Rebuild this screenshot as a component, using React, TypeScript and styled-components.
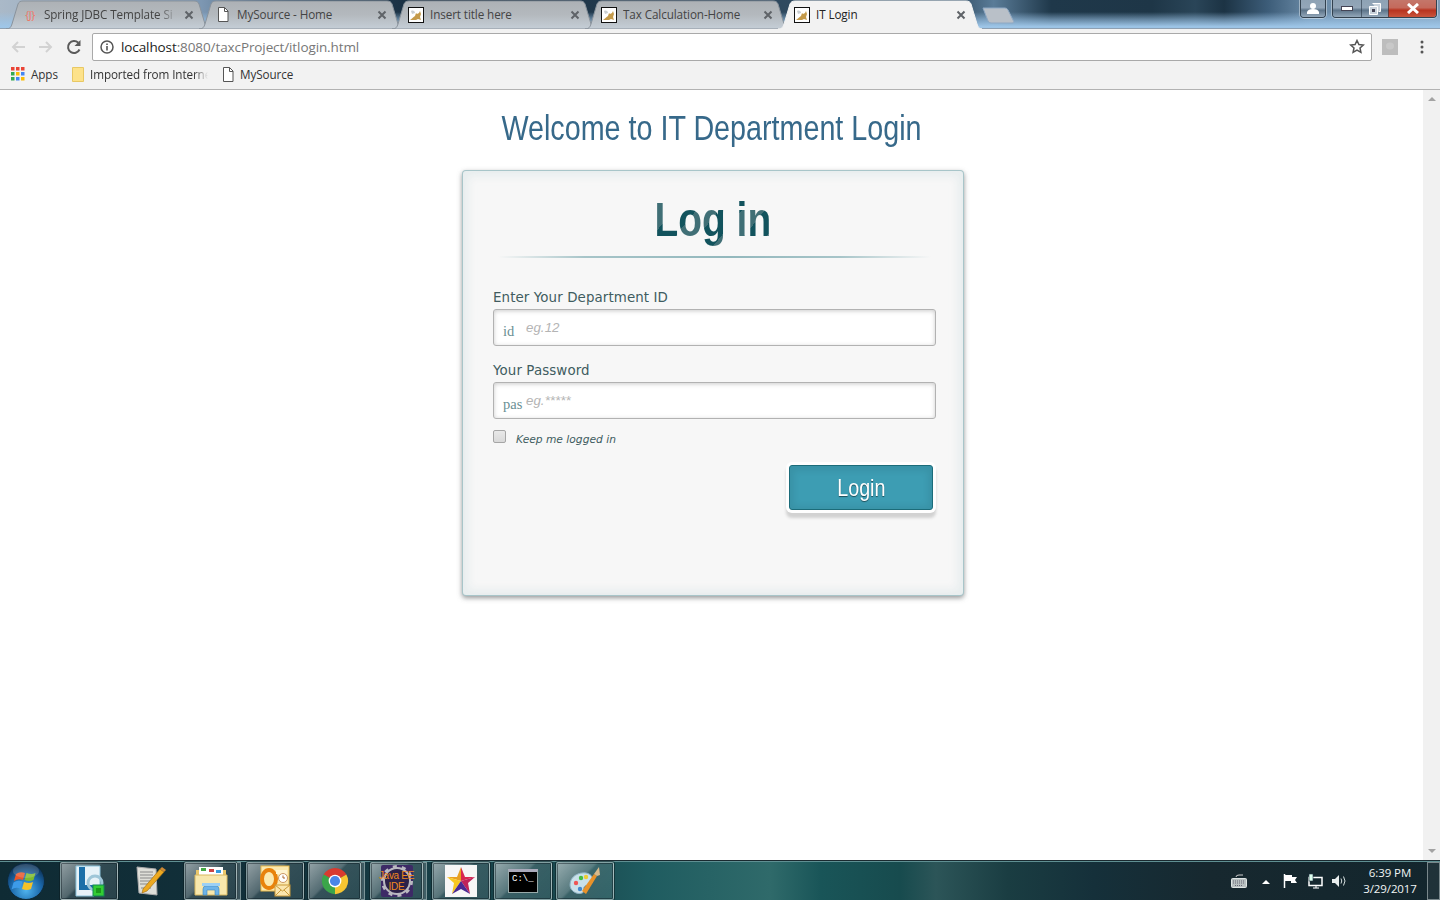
import React from "react";
import styled, { createGlobalStyle } from "styled-components";

const Global = createGlobalStyle`
  html, body { margin: 0; padding: 0; height: 100%; overflow: hidden; background: #fff; }
  #root { height: 900px; }
  * { box-sizing: border-box; }
`;
const UI = `"Open Sans", "Noto Sans", "Liberation Sans", sans-serif`;
const NARROW = `"Liberation Sans", sans-serif`;
const FORM = `"DejaVu Sans", "Noto Sans", sans-serif`;

const Screen = styled.div`
  width: 1440px; height: 900px; display: flex; flex-direction: column; overflow: hidden;
`;
const TitleBar = styled.div`
  position: relative; height: 29px; flex: none; display: flex; padding-left: 6px;
  border-bottom: 1px solid #8ea0b2;
  background:
    linear-gradient(90deg, #aab9c8 0%, #7d97b2 14%, #35536c 20%, #14293a 30%, #3d5a72 67%, #5a7c98 69%, #1f384a 73%, #1e3647 80%, #2a4558 83%, #1c3344 85%, #3c5c78 88%, #6c8ca8 91%, #7e9cb6 100%);
  &::after {
    content: ""; position: absolute; left: 0; right: 0; bottom: 0; height: 16px;
    background: linear-gradient(180deg, rgba(155,195,230,0) 0%, rgba(155,195,230,.55) 45%, rgba(158,198,232,.98) 90%);
    pointer-events: none;
  }
`;
const TabBox = styled.div<{ $active?: boolean }>`
  position: relative; z-index: ${(p) => (p.$active ? 3 : 2)}; flex: none; width: 204px; height: 28px;
  margin-right: -11px; padding: 0 16px; display: flex; align-items: center;
  font: 11.7px ${UI}; color: ${(p) => (p.$active ? "#222" : "#444")};
`;
const TabShape = styled.svg`
  position: absolute; left: 0; top: 0; width: 204px; height: 29px;
`;
const TabIcon = styled.span`
  position: relative; flex: none; width: 16px; height: 16px; margin: 1px 6px 0 0; display: flex; align-items: center; justify-content: center;
`;
const TabTitle = styled.span<{ $fade?: boolean }>`
  position: relative; flex: 1; min-width: 0; white-space: nowrap; overflow: hidden; letter-spacing: -.1px;
  ${(p) => p.$fade && `-webkit-mask-image: linear-gradient(90deg, #000 85%, transparent 100%); mask-image: linear-gradient(90deg, #000 85%, transparent 100%);`}
`;
const JMark = styled.span`
  font: 11px ${UI}; color: #ee7766; letter-spacing: -.5px; white-space: nowrap;
`;
const TabClose = styled.svg`
  position: relative; flex: none; width: 10px; height: 10px; margin: 1px 0 0 6px;
`;
const NewTab = styled.svg`
  position: relative; z-index: 2; flex: none; width: 34px; height: 17px; margin: 7px 0 0 11px;
`;
const WindowControls = styled.div`
  position: absolute; z-index: 4; top: 0; right: 3px; height: 19px; display: flex; gap: 6px;
`;
const CtlGroup = styled.div`
  display: flex; height: 18px; border: 1px solid #33424f; border-top: 0; border-radius: 0 0 4px 4px;
  box-shadow: 0 0 0 1px rgba(255,255,255,.4); overflow: hidden;
`;
const CtlBtn = styled.div<{ $w: number; $red?: boolean }>`
  width: ${(p) => p.$w}px; display: flex; align-items: center; justify-content: center;
  border-left: 1px solid rgba(40,55,70,.6);
  &:first-child { border-left: 0; }
  background: ${(p) => p.$red
    ? "linear-gradient(180deg,#c4766a 0%,#c46a5c 45%,#b8331f 60%,#c9543c 100%)"
    : "linear-gradient(180deg,#8ea2b4 0%,#93a6b8 45%,#5d7489 60%,#94a8ba 100%)"};
`;

const Toolbar = styled.div`
  height: 32px; flex: none; display: flex; align-items: center; background: #f2f2f2; padding: 3px 0 0 0;
`;
const NavBtn = styled.div<{ $w: number }>`
  flex: none; width: ${(p) => p.$w}px; display: flex; justify-content: center; align-items: center;
`;
const Omnibox = styled.div`
  flex: none; width: 1280px; height: 28px; background: #fff; border: 1px solid #a9a9a9; border-radius: 2px;
  display: flex; align-items: center; padding: 0 6px 0 7px;
`;
const Url = styled.div`
  flex: 1; margin-left: 7px; font: 13.5px ${UI}; color: #777; letter-spacing: -.1px; white-space: nowrap;
  b { font-weight: 400; color: #222; }
`;
const Bookmarks = styled.div`
  height: 29px; flex: none; display: flex; align-items: center; background: #f2f2f2; border-bottom: 1px solid #b2b2b2;
  padding: 0 0 2px 11px; font: 11.7px ${UI}; color: #333;
`;
const Bookmark = styled.div<{ $w: number }>`
  flex: none; width: ${(p) => p.$w}px; display: flex; align-items: center; gap: 6px; white-space: nowrap; overflow: hidden; letter-spacing: -.1px;
`;
const BookmarkFade = styled.span`
  width: 118px; overflow: hidden;
  -webkit-mask-image: linear-gradient(90deg, #000 88%, transparent 100%); mask-image: linear-gradient(90deg, #000 88%, transparent 100%);
`;

const Main = styled.div`
  flex: 1; min-height: 0; display: flex;
`;
const Page = styled.div`
  flex: 1; min-width: 0; background: #fff; display: flex; flex-direction: column;
`;
const Scrollbar = styled.div`
  flex: none; width: 17px; background: #f1f1f1; display: flex; flex-direction: column; justify-content: space-between; align-items: center; padding: 7px 0;
`;
const Arrow = styled.div<{ $down?: boolean }>`
  width: 0; height: 0; border-left: 4px solid transparent; border-right: 4px solid transparent;
  ${(p) => (p.$down ? "border-top: 4px solid #a3a3a3;" : "border-bottom: 4px solid #a3a3a3;")}
`;
const Heading = styled.h1`
  margin: 16px 0 0; text-align: center; height: 64px; font: 400 35px/44px ${NARROW}; color: #37698a; transform: scaleX(.82);
`;
const Card = styled.div`
  width: 502px; height: 426px; margin-left: 462px; background: #f7f7f7; border: 1px solid rgba(147,184,189,.8); border-radius: 4px;
  box-shadow: 0 2px 5px rgba(105,108,109,.7), inset 0 0 8px 5px rgba(208,223,226,.4);
  padding: 18px 27px 0 30px; display: flex; flex-direction: column;
`;
const CardTitle = styled.h2`
  margin: 0; padding: 1px 4px 0 0; height: 60px; text-align: center; font: 700 48px/60px ${NARROW}; color: #12535d; transform: scaleX(.81);
  background: repeating-linear-gradient(-45deg, #12535d, #12535d 20px, #406f76 20px, #406f76 40px);
  -webkit-background-clip: text; background-clip: text; -webkit-text-fill-color: transparent;
`;
const Divider = styled.div`
  height: 2px; margin: 7px 5px 0 5px; flex: none;
  background: linear-gradient(90deg, rgba(147,184,189,0) 0%, rgba(147,184,189,.8) 20%, #93b8bd 53%, rgba(147,184,189,.8) 79%, rgba(147,184,189,0) 100%);
`;
const Field = styled.div<{ $first?: boolean }>`
  margin-top: ${(p) => (p.$first ? 30 : 15)}px; display: flex; flex-direction: column;
`;
const Label = styled.label`
  font: 13.4px/20px ${FORM}; color: #405c60; height: 21px; letter-spacing: .1px;
`;
const InputWrap = styled.div`
  position: relative; height: 37px; display: flex;
`;
const InputGlyph = styled.span`
  position: absolute; left: 10px; top: 13px; font: 14.5px/18px "Liberation Serif", serif; color: #6b8f94;
`;
const Input = styled.input`
  flex: 1; min-width: 0; height: 37px; padding: 0 5px 0 32px; background: #fff; border: 1px solid #b2b2b2; border-radius: 3px;
  box-shadow: inset 0 1px 4px 0 rgba(168,168,168,.6); font: italic 13.3px "Liberation Sans", sans-serif; word-spacing: -3.5px; outline: none;
  &::placeholder { color: #b4b4b4; opacity: 1; }
`;
const KeepRow = styled.div`
  display: flex; align-items: center; margin-top: 12px; height: 16px;
`;
const Check = styled.span`
  flex: none; width: 13px; height: 13px; border: 1px solid #a6a6a6; border-radius: 2px; background: linear-gradient(180deg,#e9e9e9,#d9d9d9); margin-top: -5px;
`;
const KeepLabel = styled.span`
  margin-left: 10px; font: italic 10.7px/16px ${FORM}; color: #405c60; margin-top: 2px;
`;
const BtnRow = styled.div`
  display: flex; justify-content: flex-end; margin-top: 18px; padding-right: 3px;
`;
const LoginBtn = styled.button`
  width: 144px; height: 45px; padding: 0; background: #3d9db3; border: 1px solid #1c6c7a; border-radius: 3px; color: #fff;
  font: 400 24px ${NARROW}; text-shadow: 0 1px 1px rgba(0,0,0,.5);
  box-shadow: inset 0 1px 6px 4px rgba(0,0,0,.07), 0 0 0 3px #fefefe, 0 5px 3px 3px #d2d2d2;
`;
const LoginText = styled.span`
  display: inline-block; transform: scaleX(.82);
`;

const Taskbar = styled.div`
  position: relative; height: 40px; flex: none; display: flex; align-items: center; padding: 1px 0 1px 60px;
  border-top: 1px solid #1a2a30; box-shadow: inset 0 1px 0 #5f8f92;
  background:
    linear-gradient(90deg, #0f2b34 0%, #12303a 18%, #1a4a50 40%, #1f5c60 45%, #2f6a6a 53.5%, #195558 57%, #174b4e 62.500%, #2c5558 65%, #1a3d42 70%, #15303a 76%, #17282f 84%, #13262d 100%);
`;
const Orb = styled.svg`
  position: absolute; left: 6px; top: 1px; width: 40px; height: 38px;
`;
const TaskItems = styled.div`
  display: flex; gap: 4px; height: 38px;
`;
const TaskBtn = styled.div<{ $plain?: boolean; $stack?: boolean }>`
  position: relative; width: ${(p) => (p.$stack ? 53 : 58)}px; margin-right: ${(p) => (p.$stack ? 5 : 0)}px;
  height: 38px; display: flex; align-items: center; justify-content: center; border-radius: 2px;
  ${(p) => !p.$plain && `
    border: 1px solid rgba(185,205,205,.6);
    box-shadow: inset 0 0 0 1px rgba(10,25,30,.45), 0 0 0 1px rgba(10,25,30,.5);
    background: linear-gradient(135deg, rgba(255,255,255,.55) 0%, rgba(255,255,255,.28) 42%, rgba(255,255,255,.14) 46%, rgba(255,255,255,.1) 100%);
  `}
  ${(p) => p.$stack && `
    &::after { content: ""; position: absolute; top: -1px; bottom: -1px; right: -5px; width: 3px;
      border: 1px solid rgba(185,205,205,.5); border-left: 0; background: rgba(255,255,255,.18); }
  `}
`;
const Tray = styled.div`
  margin-left: auto; display: flex; align-items: center; height: 38px; color: #fff;
`;
const TrayIcon = styled.svg<{ $w: number; $ml: number }>`
  flex: none; width: ${(p) => p.$w}px; height: 16px; margin-left: ${(p) => p.$ml}px;
`;
const Clock = styled.div`
  flex: none; width: 72px; margin-left: 8px; text-align: center; font: 11.5px/16px ${UI}; color: #f0f5f5; letter-spacing: -.1px;
`;
const ShowDesktop = styled.div`
  flex: none; width: 13px; height: 38px; margin-left: 1px; border: 1px solid rgba(230,240,240,.45); background: rgba(255,255,255,.06);
`;

const Tomcat = () => (
  <svg width="16" height="16" viewBox="0 0 16 16">
    <rect x=".5" y=".5" width="15" height="15" fill="#fff" stroke="#111" />
    <path d="M2 13c2-1 3-3 5-4l1-3 1 1 2-1 1-2 1 3-1 3 1 3-3-1-2 1H2z" fill="#c49a4a" />
    <path d="M3 4c2-1 4 0 4 2L4 7z" fill="#c9ced1" />
  </svg>
);
const Page16 = () => (
  <svg width="12" height="15" viewBox="0 0 12 15" fill="#fff" stroke="#555">
    <path d="M1.500.5h6l3.500 3.500v10.500h-9.500z" /><path d="M7.500.5v4h3.500" fill="none" />
  </svg>
);
const Close = () => (
  <TabClose viewBox="0 0 10 10"><path d="M1.500 1.500l7 7M8.500 1.500l-7 7" stroke="#5f6368" strokeWidth="2" /></TabClose>
);
const Tab = ({ title, active, fade, icon }: { title: string; active?: boolean; fade?: boolean; icon: React.ReactNode }) => (
  <TabBox $active={active}>
    <TabShape viewBox="0 0 204 29">
      <defs>
        <linearGradient id="tabg" x1="0" y1="0" x2="0" y2="1">
          <stop offset="0" stopColor="#adb1b5" /><stop offset=".5" stopColor="#b4b9be" /><stop offset="1" stopColor="#c5ced7" />
        </linearGradient>
      </defs>
      <path d="M0 29 C4 29 5 27 6 24 L12 4 C13 2 14 1 17 1 H188 C191 1 192 2 193 4 L199 24 C200 27 201 29 204 29 Z"
        fill={active ? "#f2f2f2" : "url(#tabg)"} stroke={active ? "#f2f2f2" : "#8a939c"} strokeWidth="1" />
    </TabShape>
    <TabIcon>{icon}</TabIcon>
    <TabTitle $fade={fade}>{title}</TabTitle>
    <Close />
  </TabBox>
);

const Lync = () => (
  <svg width="36" height="34" viewBox="0 0 36 34">
    <path d="M5 2h24v22l-6 8H5z" fill="#e7f2f8" stroke="#8cc4dc" />
    <path d="M8 3h6v18h10v5H8z" fill="#1c6fa8" />
    <circle cx="24" cy="19" r="7" fill="none" stroke="#9fc6d8" strokeWidth="3" />
    <rect x="22" y="21" width="11" height="11" fill="#3c3" stroke="#185" />
    <rect x="25" y="24" width="5" height="5" fill="#1a9a1a" />
  </svg>
);
const Notepad = () => (
  <svg width="34" height="34" viewBox="0 0 34 34">
    <path d="M3 3l19 2 1 26-18-2z" fill="#deded8" stroke="#aaa" />
    <path d="M6 8h13M6 11h13M6 14h13M6 17h11M6 20h8M7 24h10" stroke="#888" strokeWidth="1" />
    <path d="M9 25L26 5l4 3-17 19-5 2z" fill="#eda920" stroke="#9a6a10" strokeWidth=".6" />
    <path d="M26 5l2-2 4 3-2 2z" fill="#c83" />
  </svg>
);
const Folder = () => (
  <svg width="34" height="32" viewBox="0 0 34 32">
    <path d="M2 5h30v24H2z" fill="#e9c66a" />
    <rect x="5" y="2" width="24" height="8" fill="#fff" />
    <rect x="7" y="3" width="5" height="3" fill="#4a4" /><rect x="15" y="4" width="5" height="3" fill="#c44" /><rect x="22" y="5" width="5" height="3" fill="#39d" />
    <path d="M1 10h32v20H1z" fill="#f7e7ac" stroke="#d9b860" />
    <path d="M9 30v-6q0-3 3-3h10q3 0 3 3v6h-4v-5h-8v5z" fill="#6db4e8" stroke="#3a86c0" strokeWidth=".6" />
    <rect x="8" y="18" width="18" height="3" fill="#9bd0f4" />
  </svg>
);
const Outlook = () => (
  <svg width="34" height="34" viewBox="0 0 34 34">
    <rect x="3" y="2" width="28" height="25" fill="#fbe9b0" stroke="#e9b94a" />
    <ellipse cx="11" cy="15" rx="7" ry="9" fill="none" stroke="#e8820c" strokeWidth="4" />
    <path d="M18 6h11v4H18z" fill="#fff4d0" />
    <circle cx="25" cy="14" r="4.500" fill="#fff" stroke="#c96" />
    <path d="M25 11.500V14h2" stroke="#a63" fill="none" />
    <rect x="17" y="21" width="15" height="11" fill="#fbe6ae" stroke="#c99a3a" />
    <path d="M17 21l7.500 6 7.500-6M17 32l6-6M32 32l-6-6" fill="none" stroke="#c99a3a" />
  </svg>
);
const Chrome = () => (
  <svg width="30" height="30" viewBox="0 0 32 32">
    <path d="M16 16L3.880 9A14 14 0 0 1 28.120 9z" fill="#d93a2f" />
    <path d="M16 16L28.120 9A14 14 0 0 1 16 30z" fill="#f6c531" />
    <path d="M16 16L16 30A14 14 0 0 1 3.880 9z" fill="#3ba54a" />
    <circle cx="16" cy="16" r="6.800" fill="#fff" />
    <circle cx="16" cy="16" r="5.400" fill="#4a86e8" />
  </svg>
);
const EEIcon = styled.div`
  position: relative; width: 32px; height: 32px; background: #3d2a66; border-radius: 2px; display: flex; align-items: center; justify-content: center;
`;
const EEText = styled.span`
  position: relative; text-align: center; font: 400 10px/11px "Liberation Sans", sans-serif; color: #f08a1d; white-space: nowrap; letter-spacing: -.3px;
`;
const EEGear = styled.svg`
  position: absolute; left: 0; top: 0;
`;
const JavaEE = () => (
  <EEIcon>
    <EEGear width="32" height="32" viewBox="0 0 32 32">
      <circle cx="16" cy="16" r="13" fill="#2c2148" stroke="#b9b9c0" strokeWidth="2" />
      <circle cx="16" cy="16" r="14.500" fill="none" stroke="#b9b9c0" strokeWidth="3" strokeDasharray="4 5.100" />
    </EEGear>
    <EEText>Java EE<br />IDE</EEText>
  </EEIcon>
);
const Star = () => (
  <svg width="32" height="32" viewBox="0 0 32 32">
    <rect width="32" height="32" fill="#f6f6f6" />
    <path d="M16 2v14L2 12l10 0z" fill="#e8a020" />
    <path d="M16 2l4 10h10l-14 4z" fill="#d8274f" />
    <path d="M2 12l14 4-9 13 2-11z" fill="#f8c820" />
    <path d="M30 12l-14 4 9 13-2-11z" fill="#c0245a" />
    <path d="M16 16L7 29l9-5 9 5z" fill="#4b2a92" />
  </svg>
);
const CmdBox = styled.div`
  width: 30px; height: 24px; background: #000; border: 1px solid #9aa; border-top: 3px solid #aab;
  color: #fff; font: 9px/14px "Liberation Mono", monospace; padding-left: 3px; overflow: hidden; white-space: pre;
`;
const Palette = () => (
  <svg width="34" height="32" viewBox="0 0 34 32">
    <path d="M2 20C2 11 11 7 18 8c6 1 8 6 6 10-2 3-6 1-8 4-1 3 1 5-2 6-5 2-12-2-12-8z" fill="#c9e0ea" stroke="#8fb3c4" />
    <circle cx="8" cy="18" r="2.200" fill="#e55" /><circle cx="13" cy="13" r="2.200" fill="#4b4" />
    <circle cx="18" cy="12" r="2.200" fill="#ec3" /><circle cx="12" cy="24" r="2.200" fill="#48c" />
    <path d="M14 26L26 9l3 2-11 18z" fill="#e8922a" />
    <path d="M26 9l5-7 1 8-3 1z" fill="#d9b98a" />
  </svg>
);

export default function App() {
  return (
    <Screen>
      <Global />
      <TitleBar>
        <Tab title="Spring JDBC Template Si" fade icon={<JMark>{"{J}"}</JMark>} />
        <Tab title="MySource - Home" icon={<Page16 />} />
        <Tab title="Insert title here" icon={<Tomcat />} />
        <Tab title="Tax Calculation-Home" icon={<Tomcat />} />
        <Tab title="IT Login" active icon={<Tomcat />} />
        <NewTab viewBox="0 0 34 17">
          <path d="M1 1h22q2 0 3 2l6 12q0 1-2 1H9q-2 0-3-2z" fill="#b9c0c8" stroke="#8fa9c4" />
        </NewTab>
        <WindowControls>
          <CtlGroup>
            <CtlBtn $w={24}>
              <svg width="12" height="11" viewBox="0 0 12 11"><circle cx="6" cy="3" r="3" fill="#fff" /><path d="M0 11V9q1-3 6-3t6 3v2z" fill="#fff" /></svg>
            </CtlBtn>
          </CtlGroup>
          <CtlGroup>
            <CtlBtn $w={28}><svg width="12" height="5" viewBox="0 0 12 5"><rect x=".5" y=".5" width="11" height="4" fill="#fff" stroke="#445" /></svg></CtlBtn>
            <CtlBtn $w={27}><svg width="12" height="12" viewBox="0 0 12 12"><path d="M3.500.5h8v8h-2M.5 3.500h8v8h-8z" fill="#c9d3dc" stroke="#fff" /><rect x="3" y="6" width="3" height="3" fill="#445" /></svg></CtlBtn>
            <CtlBtn $w={48} $red><svg width="14" height="11" viewBox="0 0 14 11"><path d="M2 1l10 9M12 1L2 10" stroke="#fff" strokeWidth="3" /></svg></CtlBtn>
          </CtlGroup>
        </WindowControls>
      </TitleBar>
      <Toolbar>
        <NavBtn $w={35}><svg width="16" height="14" viewBox="0 0 16 14"><path d="M15 7H3M8 2L3 7l5 5" fill="none" stroke="#d2d2d2" strokeWidth="2" /></svg></NavBtn>
        <NavBtn $w={21}><svg width="16" height="14" viewBox="0 0 16 14"><path d="M1 7h12M8 2l5 5-5 5" fill="none" stroke="#d2d2d2" strokeWidth="2" /></svg></NavBtn>
        <NavBtn $w={36}><svg width="16" height="16" viewBox="0 0 16 16"><path d="M13.500 10.500A6 6 0 1 1 12.300 3.800" fill="none" stroke="#5a5a5a" strokeWidth="2" /><path d="M14.500 1v6h-6z" fill="#5a5a5a" /></svg></NavBtn>
        <Omnibox>
          <svg width="14" height="14" viewBox="0 0 14 14"><circle cx="7" cy="7" r="6" fill="none" stroke="#555" strokeWidth="1.500" /><path d="M7 6v4.500M7 3.500v1.500" stroke="#555" strokeWidth="1.600" /></svg>
          <Url><b>localhost</b>:8080/taxcProject/itlogin.html</Url>
          <svg width="16" height="15" viewBox="0 0 16 15"><path d="M8 1.500l1.900 4 4.400.5-3.300 3 .9 4.300L8 11.200l-3.900 2.100.9-4.300-3.300-3 4.400-.5z" fill="none" stroke="#555" strokeWidth="1.500" /></svg>
        </Omnibox>
        <NavBtn $w={36}><svg width="16" height="16" viewBox="0 0 16 16"><rect width="16" height="16" fill="#bdbdbd" /><ellipse cx="8" cy="7" rx="4" ry="3.500" fill="#c8c8c8" /></svg></NavBtn>
        <NavBtn $w={28}><svg width="4" height="14" viewBox="0 0 4 14"><circle cx="2" cy="2" r="1.500" fill="#555" /><circle cx="2" cy="7" r="1.500" fill="#555" /><circle cx="2" cy="12" r="1.500" fill="#555" /></svg></NavBtn>
      </Toolbar>
      <Bookmarks>
        <Bookmark $w={61}>
          <svg width="14" height="14" viewBox="0 0 14 14">
            {[0, 5, 10].map((y, r) => [0, 5, 10].map((x, c) => (
              <rect key={`${x}${y}`} x={x} y={y} width="3.500" height="3.500"
                fill={[["#ea4335", "#ea4335", "#ea4335"], ["#34a853", "#fbbc05", "#4285f4"], ["#34a853", "#4285f4", "#fbbc05"]][r][c]} />
            )))}
          </svg>
          Apps
        </Bookmark>
        <Bookmark $w={150}>
          <svg width="12" height="15" viewBox="0 0 12 15"><path d="M.5.5h11v14H.5z" fill="#fde28a" stroke="#e8c864" /></svg>
          <BookmarkFade>Imported from Interne</BookmarkFade>
        </Bookmark>
        <Bookmark $w={90}><Page16 />MySource</Bookmark>
      </Bookmarks>
      <Main>
        <Page>
          <Heading>Welcome to IT Department Login</Heading>
          <Card>
            <CardTitle>Log in</CardTitle>
            <Divider />
            <Field $first>
              <Label>Enter Your Department ID</Label>
              <InputWrap>
                <Input placeholder="eg. 12" readOnly />
                <InputGlyph>id</InputGlyph>
              </InputWrap>
            </Field>
            <Field>
              <Label>Your Password</Label>
              <InputWrap>
                <Input placeholder="eg. *****" readOnly />
                <InputGlyph>pas</InputGlyph>
              </InputWrap>
            </Field>
            <KeepRow>
              <Check />
              <KeepLabel>Keep me logged in</KeepLabel>
            </KeepRow>
            <BtnRow><LoginBtn><LoginText>Login</LoginText></LoginBtn></BtnRow>
          </Card>
        </Page>
        <Scrollbar><Arrow /><Arrow $down /></Scrollbar>
      </Main>
      <Taskbar>
        <Orb viewBox="0 0 40 38">
          <defs>
            <radialGradient id="orb" cx=".5" cy=".75" r=".7">
              <stop offset="0" stopColor="#4fb4ee" /><stop offset=".6" stopColor="#1a66a8" /><stop offset="1" stopColor="#0c2f52" />
            </radialGradient>
          </defs>
          <circle cx="20" cy="19" r="18.500" fill="url(#orb)" stroke="#0d2a3a" />
          <path d="M10 12q4-3 9-1l-2 7q-5-2-9 1z" fill="#e8562a" />
          <path d="M20.500 11q5 2 9 0l-2 7q-4 2-9 0z" fill="#7cbb2e" />
          <path d="M7.500 20.500q4-3 9-1l-2 7q-5-2-9 1z" fill="#3d9be8" />
          <path d="M18 20q5 2 9 0l-2 7q-4 2-9 0z" fill="#f5c228" />
          <ellipse cx="20" cy="9" rx="13" ry="7" fill="#fff" opacity=".16" />
        </Orb>
        <TaskItems>
          <TaskBtn><Lync /></TaskBtn>
          <TaskBtn $plain><Notepad /></TaskBtn>
          <TaskBtn $stack><Folder /></TaskBtn>
          <TaskBtn><Outlook /></TaskBtn>
          <TaskBtn $stack><Chrome /></TaskBtn>
          <TaskBtn $stack><JavaEE /></TaskBtn>
          <TaskBtn><Star /></TaskBtn>
          <TaskBtn><CmdBox>{"C:\\_"}</CmdBox></TaskBtn>
          <TaskBtn><Palette /></TaskBtn>
        </TaskItems>
        <Tray>
          <TrayIcon $w={16} $ml={0} viewBox="0 0 16 16">
            <path d="M5 4q0-2 3-2h4" fill="none" stroke="#ccc" /><rect x=".5" y="5.500" width="15" height="9" rx="1" fill="#b8c0c0" stroke="#dfe5e5" />
            <path d="M2 8h12M2 10h12M4 12.500h8" stroke="#667" strokeDasharray="1 1" />
          </TrayIcon>
          <TrayIcon $w={8} $ml={15} viewBox="0 0 8 16"><path d="M0 11l4-4 4 4z" fill="#fff" /></TrayIcon>
          <TrayIcon $w={15} $ml={13} viewBox="0 0 15 16"><path d="M1.500 1v14" stroke="#fff" strokeWidth="1.500" /><path d="M2 2h7v2h5l-2 3 2 3H8V8H2z" fill="#fff" /></TrayIcon>
          <TrayIcon $w={15} $ml={10} viewBox="0 0 15 16"><path d="M1 4.500h13v8H1z" fill="none" stroke="#fff" strokeWidth="1.500" /><path d="M5 15h6M8 12v3" stroke="#fff" /><rect x="1" y="1" width="4" height="7" fill="#dfe" stroke="#234" strokeWidth=".6" /></TrayIcon>
          <TrayIcon $w={14} $ml={9} viewBox="0 0 14 16"><path d="M0 6h3l4-4v12l-4-4H0z" fill="#e9eeee" /><path d="M9 5.500q1.500 2.500 0 5M11.500 3.500q3 4.500 0 9" fill="none" stroke="#d5dede" /></TrayIcon>
          <Clock>6:39 PM<br />3/29/2017</Clock>
          <ShowDesktop />
        </Tray>
      </Taskbar>
    </Screen>
  );
}
